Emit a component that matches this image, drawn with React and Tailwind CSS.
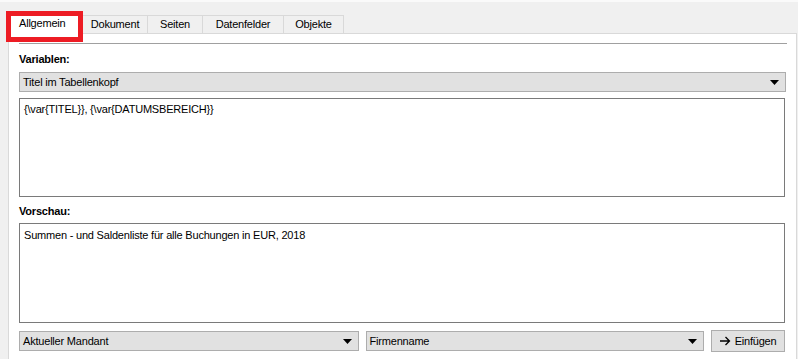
import React from 'react';

const font = { fontFamily: '"Liberation Sans", Tahoma, sans-serif' };

const tabs = [
    ['Dokument', 'w-[65px]'],
    ['Seiten', 'w-[55px]'],
    ['Datenfelder', 'w-[81px]'],
    ['Objekte', 'w-[60px]'],
];

const Arrow = () => (
    <svg width="9" height="5" viewBox="0 0 9 5" className="shrink-0">
        <path d="M0 0h9L4.5 5z" fill="#000" />
    </svg>
);

const Combo = ({ label, className = '' }) => (
    <div className={`h-[20px] flex items-center justify-between pl-[3px] pr-[6px] bg-[#e1e1e1] border border-[#adadad] ${className}`}>
        <span>{label}</span>
        <Arrow />
    </div>
);

export default function App() {
    return (
        <div className="relative w-[798px] h-[359px] overflow-hidden bg-[#f0f0f0] border-t-2 border-[#fafafa] text-[11px] tracking-[-0.2px] text-black leading-none" style={font}>
            {/* Tab bar */}
            <div className="flex items-end h-[31px] pl-[10px]">
                <div className="h-[21px] w-[73px] bg-white flex items-center pl-[9px] relative z-10 mb-[-1px]">Allgemein</div>
                {tabs.map(([t, w]) => (
                    <div key={t} className={`h-[18px] ${w} flex items-center justify-center border-t border-r border-[#d9d9d9] bg-[#f0f0f0]`}>{t}</div>
                ))}
            </div>

            {/* Panel */}
            <div className="ml-[8px] w-[789px] h-[330px] bg-white border border-[#d9d9d9] border-b-0 pl-[10px] pr-[9px] pt-[9px] flex flex-col">
                <div className="h-px bg-[#a0a0a0]" />
                <div className="mt-[10px] font-bold h-[13px]">Variablen:</div>
                <Combo label="Titel im Tabellenkopf" className="mt-[5px] w-[767px]" />
                <div className="mt-[6px] h-[99px] border border-[#7a7a7a] px-[4px] pt-[5px] w-[766px]">{'{\\var{TITEL}}, {\\var{DATUMSBEREICH}}'}</div>
                <div className="mt-[9px] font-bold h-[13px]">Vorschau:</div>
                <div className="mt-[4px] h-[100px] border border-[#7a7a7a] px-[4px] pt-[6px] w-[766px]">Summen - und Saldenliste für alle Buchungen in EUR, 2018</div>
                <div className="mt-[8px] flex items-center w-[766px]">
                    <Combo label="Aktueller Mandant" className="w-[340px]" />
                    <Combo label="Firmenname" className="ml-[7px] w-[339px]" />
                    <div className="ml-[7px] -my-px h-[22px] w-[74px] flex items-center justify-center gap-[4px] bg-[#e1e1e1] border border-[#adadad]">
                        <svg width="11" height="10" viewBox="0 0 11 10">
                            <path d="M0 5h9.5M5.5 1l4 4-4 4" stroke="#000" strokeWidth="1.3" fill="none" />
                        </svg>
                        <span>Einfügen</span>
                    </div>
                </div>
            </div>

            {/* Red highlight */}
            <div className="absolute z-20 left-[6px] top-[9px] w-[77px] h-[31px] border-[5px] border-[#ed1c24]" />
        </div>
    );
}
